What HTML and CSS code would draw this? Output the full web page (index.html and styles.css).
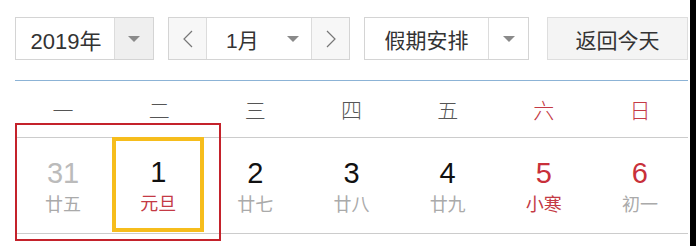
FILE: index.html
```html
<!DOCTYPE html>
<html lang="zh-CN">
<head>
  <meta charset="UTF-8" />
  <title>万年历</title>
  <link rel="stylesheet" href="styles.css">
</head>
<body>
  <div class="page">
    <div class="toolbar">
      <div class="select year">
        <span class="value">2019年</span>
        <span class="arrow"><i class="caret"></i></span>
      </div>
      <div class="select month">
        <span class="step">
          <svg width="10" height="18" viewBox="0 0 10 18"><polyline points="9,1 1,9 9,17" fill="none" stroke="#777" stroke-width="1.2"/></svg>
        </span>
        <span class="value">1月<i class="caret"></i></span>
        <span class="step">
          <svg width="10" height="18" viewBox="0 0 10 18"><polyline points="1,1 9,9 1,17" fill="none" stroke="#777" stroke-width="1.2"/></svg>
        </span>
      </div>
      <div class="select holiday">
        <span class="value">假期安排</span>
        <span class="arrow"><i class="caret"></i></span>
      </div>
      <button class="today">返回今天</button>
    </div>

    <div class="calendar">
      <div class="weekdays">
        <span>一</span><span>二</span><span>三</span><span>四</span>
        <span>五</span><span class="weekend">六</span><span class="weekend">日</span>
      </div>
      <div class="days">
        <div class="day other"><b>31</b><small>廿五</small></div>
        <div class="day selected"><b>1</b><small class="festival">元旦</small></div>
        <div class="day"><b>2</b><small>廿七</small></div>
        <div class="day"><b>3</b><small>廿八</small></div>
        <div class="day"><b>4</b><small>廿九</small></div>
        <div class="day weekend"><b>5</b><small class="festival">小寒</small></div>
        <div class="day weekend"><b>6</b><small>初一</small></div>
      </div>
      <div class="mark"></div>
    </div>
  </div>
</body>
</html>
```

FILE: styles.css
```css
html, body {
  margin: 0;
  background: #000;
}

.page {
  width: 690px;
  height: 246px;
  background: #fff;
  font-family: "Liberation Sans", "Noto Sans CJK SC", sans-serif;
  position: relative;
  overflow: hidden;
}

.toolbar {
  display: flex;
  padding: 17px 0 0 15px;
  height: 43px;
}

.select {
  display: flex;
  height: 43px;
  box-sizing: border-box;
  border: 1px solid #d4d4d4;
  color: #333;
  font-size: 21px;
}

.select .value {
  display: flex;
  align-items: center;
  justify-content: center;
}

.select .arrow {
  display: flex;
  align-items: center;
  justify-content: center;
  border-left: 1px solid #dcdcdc;
}

.caret {
  display: inline-block;
  width: 0;
  height: 0;
  border-left: 6px solid transparent;
  border-right: 6px solid transparent;
  border-top: 6px solid #8a8a8a;
}

.year {
  width: 139px;
}

.year .value {
  width: 96px;
  font-size: 22px;
  padding-left: 2px;
}

.year .arrow {
  flex: 1;
  background: #efefef;
}

.month {
  width: 182px;
  margin-left: 14px;
}

.month .step {
  width: 37px;
  display: flex;
  align-items: center;
  justify-content: center;
  background: #f7f7f7;
}

.month .value {
  flex: 1;
  border-left: 1px solid #dcdcdc;
  border-right: 1px solid #dcdcdc;
  justify-content: flex-start;
  padding-left: 19px;
}

.month .caret {
  margin-left: 28px;
}

.holiday {
  width: 165px;
  margin-left: 14px;
}

.holiday .value {
  width: 123px;
}

.holiday .arrow {
  flex: 1;
}

.today {
  width: 141px;
  height: 43px;
  margin-left: 18px;
  border: 1px solid #dedede;
  background: #f4f4f4;
  color: #333;
  font-family: "Noto Sans CJK SC", sans-serif;
  font-size: 21px;
  padding: 0;
}

.calendar {
  margin: 20px 0 0 15px;
  width: 673px;
  border-top: 1px solid #8cb3d6;
}

.weekdays {
  display: grid;
  grid-template-columns: repeat(7, 1fr);
  height: 56px;
  align-items: center;
  border-bottom: 1px solid #cccccc;
  color: #555;
  font-size: 21px;
  font-family: "Noto Sans CJK SC", sans-serif;
  font-weight: 300;
  text-align: center;
}

.weekdays .weekend {
  color: #c43a45;
}

.days {
  display: grid;
  grid-template-columns: repeat(7, 1fr);
  height: 95px;
  border-bottom: 1px solid #cccccc;
}

.day {
  display: flex;
  flex-direction: column;
  align-items: center;
  justify-content: center;
  padding-top: 2px;
}

.day b {
  font-weight: normal;
  font-size: 29px;
  line-height: 32px;
  color: #111;
}

.day small {
  font-family: "Noto Sans CJK SC", sans-serif;
  font-size: 18px;
  line-height: 28px;
  color: #aaa;
}

.day.other b {
  color: #bbb;
}

.day.weekend b {
  color: #c8303a;
}

.day small.festival {
  color: #c43a45;
}

.day.selected {
  margin: -1px 3px 1px 1px;
  border: 4px solid #f6bd1c;
}

.mark {
  position: absolute;
  left: 15px;
  top: 123px;
  width: 206px;
  height: 118px;
  box-sizing: border-box;
  border: 2px solid #c4222b;
}
```
